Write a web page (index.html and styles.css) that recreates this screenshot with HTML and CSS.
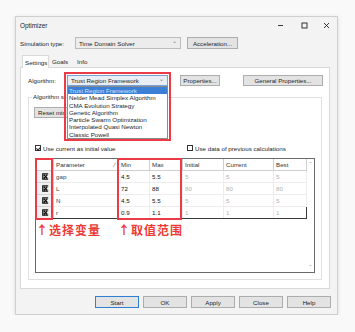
FILE: index.html
```html
<!DOCTYPE html>
<html lang="en">
<head>
  <meta charset="UTF-8">
  <meta name="viewport" content="width=device-width, initial-scale=1.0">
  <title>Optimizer</title>
  <link rel="stylesheet" href="styles.css">
</head>
<body>
  <div class="window">
    <div class="titlebar">
      <span class="title">Optimizer</span>
      <div class="controls">
        <span class="ctl min"><svg width="7" height="7" viewBox="0 0 7 7"><path d="M1 3.5H6" stroke="#222" stroke-width="0.9"/></svg></span>
        <span class="ctl"><svg width="7" height="7" viewBox="0 0 7 7"><rect x="1" y="1" width="5" height="5" fill="none" stroke="#222" stroke-width="0.9"/></svg></span>
        <span class="ctl"><svg width="7" height="7" viewBox="0 0 7 7"><path d="M1 1L6 6M6 1L1 6" stroke="#222" stroke-width="0.9"/></svg></span>
      </div>
    </div>

    <div class="simrow">
      <span class="label simlabel">Simulation type:</span>
      <div class="select sim">Time Domain Solver<span class="chev">&#8964;</span></div>
      <div class="btn accel">Acceleration...</div>
    </div>

    <div class="tabs">
      <div class="tab active">Settings</div>
      <div class="tab goals">Goals</div>
      <div class="tab info">Info</div>
    </div>

    <div class="panel">
      <div class="algrow">
        <span class="label alglabel">Algorithm:</span>
        <div class="algwrap">
          <div class="select alg">Trust Region Framework<span class="chev">&#8964;</span></div>
          <ul class="dropdown">
            <li class="picked">Trust Region Framework</li>
            <li>Nelder Mead Simplex Algorithm</li>
            <li>CMA Evolution Strategy</li>
            <li>Genetic Algorithm</li>
            <li>Particle Swarm Optimization</li>
            <li>Interpolated Quasi Newton</li>
            <li>Classic Powell</li>
          </ul>
          <div class="mark algmark"></div>
        </div>
        <div class="btn props">Properties...</div>
        <div class="btn gprops">General Properties...</div>
      </div>

      <fieldset class="group">
        <legend>Algorithm s</legend>
        <div class="btn reset">Reset min</div>

        <div class="checks">
          <label class="check first"><span class="box on"></span>Use current as initial value</label>
          <label class="check second"><span class="box"></span>Use data of previous calculations</label>
        </div>

        <div class="frame">
          <div class="grid">
            <table>
              <colgroup>
                <col class="c-sel"><col class="c-par"><col class="c-min"><col class="c-max">
                <col class="c-ini"><col class="c-cur"><col class="c-best">
              </colgroup>
              <thead>
                <tr>
                  <th></th>
                  <th class="sort">Parameter<span class="sorticon">&#8725;</span></th>
                  <th>Min</th>
                  <th>Max</th>
                  <th>Initial</th>
                  <th>Current</th>
                  <th>Best</th>
                </tr>
              </thead>
              <tbody>
                <tr>
                  <td class="sel"><svg width="7" height="7" viewBox="0 0 7 7"><path d="M6.2 0.8H0.8V6.2H6.2M2 2L5.2 5.2M5.2 2L2 5.2" fill="none" stroke="#111" stroke-width="1.3"/></svg></td>
                  <td>gap</td><td class="val">4.5</td><td class="val">5.5</td>
                  <td class="off">5</td><td class="off">5</td><td class="off">5</td>
                </tr>
                <tr>
                  <td class="sel"><svg width="7" height="7" viewBox="0 0 7 7"><path d="M6.2 0.8H0.8V6.2H6.2M2 2L5.2 5.2M5.2 2L2 5.2" fill="none" stroke="#111" stroke-width="1.3"/></svg></td>
                  <td>L</td><td class="val">72</td><td class="val">88</td>
                  <td class="off">80</td><td class="off">80</td><td class="off">80</td>
                </tr>
                <tr>
                  <td class="sel"><svg width="7" height="7" viewBox="0 0 7 7"><path d="M6.2 0.8H0.8V6.2H6.2M2 2L5.2 5.2M5.2 2L2 5.2" fill="none" stroke="#111" stroke-width="1.3"/></svg></td>
                  <td>N</td><td class="val">4.5</td><td class="val">5.5</td>
                  <td class="off">5</td><td class="off">5</td><td class="off">5</td>
                </tr>
                <tr class="focus">
                  <td class="sel"><svg width="7" height="7" viewBox="0 0 7 7"><path d="M6.2 0.8H0.8V6.2H6.2M2 2L5.2 5.2M5.2 2L2 5.2" fill="none" stroke="#111" stroke-width="1.3"/></svg></td>
                  <td>r</td><td class="val">0.9</td><td class="val">1.1</td>
                  <td class="off">1</td><td class="off">1</td><td class="off">1</td>
                </tr>
              </tbody>
            </table>

            <div class="notes">
              <span class="note n1">↑选择变量</span>
              <span class="note n2">↑取值范围</span>
            </div>

            <div class="mark selmark"></div>
            <div class="mark rangemark"></div>
          </div>
          <div class="scroll">
            <span>&#710;</span>
            <span>&#711;</span>
          </div>
        </div>
      </fieldset>
    </div>

    <div class="buttons">
      <div class="btn big default">Start</div>
      <div class="btn big">OK</div>
      <div class="btn big">Apply</div>
      <div class="btn big">Close</div>
      <div class="btn big">Help</div>
    </div>
  </div>
</body>
</html>
```

FILE: styles.css
```css
body {
  margin: 0;
  background-color: #f9f9f9;
  font-family: "Liberation Sans", Arial, sans-serif;
  font-size: 6.2px;
  color: #1e1e1e;
}

/* 窗口 */
.window {
  margin: 16px 0 0 15px;
  width: 323px;
  height: 299px;
  box-sizing: border-box;
  border: 1px solid #cfcfcf;
  background: #f3f3f3;
  box-shadow: 0 1px 4px rgba(0, 0, 0, 0.12);
  display: flex;
  flex-direction: column;
}

.titlebar {
  height: 17px;
  display: flex;
  align-items: center;
  padding-left: 4px;
}
.title {
  font-size: 6.4px;
}
.controls {
  margin-left: auto;
  display: flex;
}
.ctl {
  width: 22px;
  display: flex;
  justify-content: center;
}
.ctl.min {
  width: 25px;
}

/* 控件 */
.label {
  flex: none;
}
.select {
  box-sizing: border-box;
  border: 1px solid #bcbcbc;
  background: #ececec;
  display: flex;
  align-items: center;
  padding-left: 3px;
  position: relative;
}
.chev {
  position: absolute;
  right: 3px;
  top: -1px;
  color: #777;
  font-size: 6px;
}
.btn {
  box-sizing: border-box;
  height: 12px;
  border: 1px solid #adadad;
  background: #e3e3e3;
  display: flex;
  align-items: center;
  justify-content: center;
  flex: none;
}

.simrow {
  display: flex;
  align-items: center;
  height: 12px;
  margin-top: 3px;
  padding-left: 4px;
}
.simlabel {
  width: 55px;
}
.sim {
  width: 106px;
  height: 12px;
}
.accel {
  width: 51px;
  margin-left: 6px;
}

/* 标签页 */
.tabs {
  display: flex;
  height: 12px;
  margin: 6px 0 0 6px;
}
.tab {
  box-sizing: border-box;
  padding: 0 3px;
  display: flex;
  align-items: center;
}
.tab.active {
  width: 27px;
  background: #fff;
  border: 1px solid #d9d9d9;
  border-bottom: none;
  margin-bottom: -1px;
  position: relative;
  z-index: 1;
  padding-left: 2px;
}
.goals {
  width: 24px;
}
.info {
  padding-left: 4px;
}

.panel {
  height: 222px;
  margin: 0 7px 0 4px;
  box-sizing: border-box;
  border: 1px solid #d9d9d9;
  background: #fff;
}

.algrow {
  display: flex;
  align-items: center;
  height: 11px;
  margin-top: 7px;
  padding-left: 7px;
  position: relative;
  z-index: 2;
}
.alglabel {
  width: 39px;
}
.algwrap {
  position: relative;
  width: 101px;
  height: 11px;
}
.alg {
  width: 101px;
  height: 11px;
  background: #e9eef5;
  border-color: #7aa0d6;
}
.dropdown {
  position: absolute;
  left: 0;
  top: 11px;
  width: 101px;
  margin: 0;
  padding: 0;
  list-style: none;
  box-sizing: border-box;
  border: 1px solid #8a8a8a;
  background: #fff;
}
.dropdown li {
  height: 7.3px;
  line-height: 7.3px;
  padding-left: 1px;
  white-space: nowrap;
}
.dropdown .picked {
  background: #3c7fd6;
  color: #cfe0f7;
}
.props {
  width: 40px;
  height: 11px;
  margin-left: 12px;
}
.gprops {
  width: 80px;
  height: 11px;
  margin-left: 23px;
}

/* 红框标注 */
.mark {
  position: absolute;
  box-sizing: border-box;
  border: 2px solid #ec3a46;
  pointer-events: none;
}
.algmark {
  left: -3px;
  top: -3px;
  width: 107px;
  height: 69px;
}
.selmark {
  left: -1px;
  top: -1px;
  width: 18px;
  height: 62px;
}
.rangemark {
  left: 81px;
  top: -1px;
  width: 65px;
  height: 62px;
}

/* 设置组 */
.group {
  margin: 7px 0 0 7px;
  width: 294px;
  height: 187px;
  box-sizing: border-box;
  padding: 0 6px 6px 5px;
  border: 1px solid #e0e0e0;
}
.group legend {
  padding: 0 1px;
  margin-left: -2px;
  line-height: 8px;
}
.reset {
  width: 46px;
  height: 11px;
  margin-top: 6px;
  justify-content: flex-start;
  padding-left: 3px;
}

.checks {
  display: flex;
  align-items: center;
  height: 8px;
  margin-top: 26px;
}
.check {
  display: flex;
  align-items: center;
  gap: 2px;
}
.check.first {
  margin-left: 1px;
  width: 152px;
}
.box {
  width: 6px;
  height: 6px;
  box-sizing: border-box;
  border: 1px solid #333;
  background: #fff;
  position: relative;
}
.box.on::after {
  content: "";
  position: absolute;
  left: 1.2px;
  top: 0;
  width: 1.5px;
  height: 3px;
  border: solid #222;
  border-width: 0 1px 1px 0;
  transform: rotate(40deg);
}

/* 参数表 */
.frame {
  margin: 6px 0 0 1px;
  width: 280px;
  height: 115px;
  box-sizing: border-box;
  border: 1px solid #6a6a6a;
  display: flex;
  background: #fff;
}
.grid {
  flex: 1;
  position: relative;
}
table {
  border-collapse: collapse;
  table-layout: fixed;
  width: 270px;
}
.c-sel { width: 17px; }
.c-par { width: 65px; }
.c-min { width: 31px; }
.c-max { width: 33px; }
.c-ini { width: 41px; }
.c-cur { width: 50px; }
.c-best { width: 33px; }

th, td {
  height: 11px;
  padding: 0 0 0 2px;
  text-align: left;
  font-weight: normal;
  white-space: nowrap;
  overflow: hidden;
}
th {
  border-right: 1px solid #cfcfcf;
  border-bottom: 1px solid #cfcfcf;
  color: #333;
}
td {
  border-right: 1px solid #ededed;
  border-bottom: 1px solid #ededed;
  color: #444;
}
th.sort {
  position: relative;
}
.sorticon {
  position: absolute;
  right: 3px;
  top: 2px;
  color: #555;
}
td.sel {
  background: #f1f1f1;
  border: 1px solid #d2d2d2;
  text-align: center;
  padding: 0;
  line-height: 0;
}
td.val {
  color: #111;
}
td.off {
  color: #b0b0b0;
}
.focus td {
  border-top: 1px solid #3a3a3a;
  border-bottom: 1px solid #3a3a3a;
}
.focus td:last-child {
  border-right: 1px solid #3a3a3a;
}

.notes {
  display: flex;
  margin-top: 4px;
  height: 13px;
  align-items: center;
}
.note {
  font-family: "Noto Sans CJK SC", sans-serif;
  font-size: 12px;
  font-weight: 700;
  color: #ee3a35;
  letter-spacing: 1px;
  line-height: 13px;
}
.n1 {
  width: 82px;
}

.scroll {
  width: 8px;
  display: flex;
  flex-direction: column;
  justify-content: space-between;
  align-items: center;
  color: #9a9a9a;
  font-size: 7px;
  line-height: 7px;
  padding: 2px 0 1px;
}

/* 底部按钮 */
.buttons {
  display: flex;
  justify-content: flex-end;
  gap: 4px;
  margin-top: 7px;
  padding-right: 6px;
}
.big {
  width: 44px;
}
.default {
  border-color: #2f7fd4;
}
```
